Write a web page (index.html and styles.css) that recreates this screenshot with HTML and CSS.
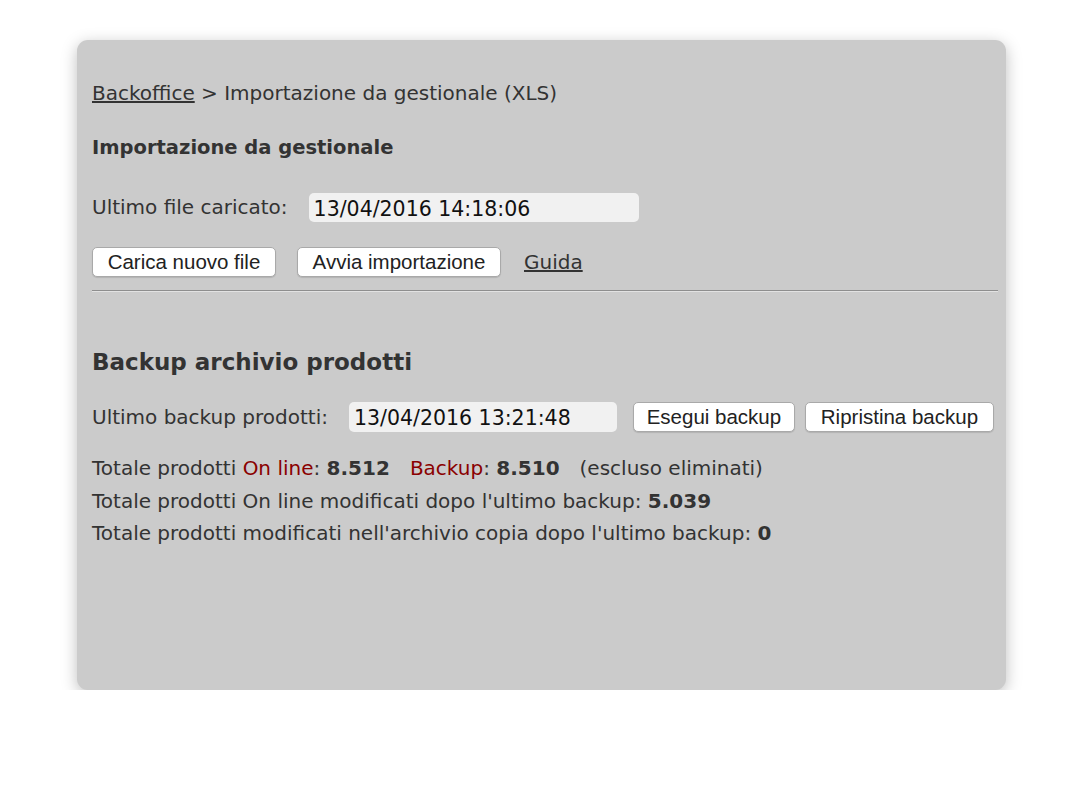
FILE: index.html
```html
<!DOCTYPE html>
<html>
<head>
<meta charset="utf-8">
<link rel="stylesheet" href="styles.css">
</head>
<body>
<div class="panel">
  <div class="crumbs"><a href="#">Backoffice</a> &gt; Importazione da gestionale (XLS)</div>
  <div class="subtitle">Importazione da gestionale</div>
  <div class="row row-file">
    <span class="label">Ultimo file caricato:</span>
    <span class="field field-file">13/04/2016 14:18:06</span>
  </div>
  <div class="row row-actions">
    <button class="btn btn-load">Carica nuovo file</button>
    <button class="btn btn-import">Avvia importazione</button>
    <a href="#" class="guide">Guida</a>
  </div>
  <hr class="sep">
  <h2 class="title">Backup archivio prodotti</h2>
  <div class="row row-backup">
    <span class="label">Ultimo backup prodotti:</span>
    <span class="field field-backup">13/04/2016 13:21:48</span>
    <button class="btn btn-exec">Esegui backup</button>
    <button class="btn btn-restore">Ripristina backup</button>
  </div>
  <div class="stats">
    <p>Totale prodotti <span class="red">On line</span>: <b>8.512</b><span class="gap"></span><span class="red">Backup</span>: <b>8.510</b><span class="gap"></span>(escluso eliminati)</p>
    <p>Totale prodotti On line modificati dopo l'ultimo backup: <b>5.039</b></p>
    <p>Totale prodotti modificati nell'archivio copia dopo l'ultimo backup: <b>0</b></p>
  </div>
</div>
</body>
</html>
```
FILE: styles.css
```css
html, body {
  margin: 0;
  padding: 0;
  background: #ffffff;
}
body {
  padding: 40px 0 0 77px;
  font-family: "DejaVu Sans", Verdana, sans-serif;
  color: #333333;
}
.panel {
  width: 929px;
  height: 650px;
  box-sizing: border-box;
  background: #cbcbcb;
  border-radius: 11px;
  box-shadow: 0 4px 16px rgba(0,0,0,0.26);
  padding: 40px 8px 0 15px;
  font-size: 20px;
}
.crumbs {
  line-height: 26px;
  height: 26px;
}
.crumbs a, .guide {
  color: #333333;
  text-decoration: underline;
}
.subtitle {
  margin-top: 29px;
  font-weight: bold;
  line-height: 26px;
  font-size: 19.5px;
}
.row {
  display: flex;
  align-items: center;
}
.row-file {
  margin-top: 31px;
  height: 30px;
}
.label {
  white-space: nowrap;
}
.field {
  box-sizing: border-box;
  background: #f1f1f1;
  border-radius: 5px;
  height: 29px;
  line-height: 29px;
  padding: 2px 0 0 5px;
  font-size: 20.5px;
  color: #111;
}
.field-file {
  width: 330px;
  margin-left: 21px;
}
.row-actions {
  margin-top: 25px;
  height: 30px;
}
.btn {
  box-sizing: border-box;
  height: 30px;
  background: #ffffff;
  border: 1px solid #a9a9a9;
  border-radius: 5px;
  font-family: "Liberation Sans", Arial, sans-serif;
  font-size: 20.5px;
  color: #222;
  padding: 0;
  margin: 0;
  box-shadow: 0 1px 1px rgba(0,0,0,0.12);
}
.btn-load { width: 184px; }
.btn-import { width: 204px; margin-left: 21px; }
.guide { margin-left: 23px; }
.sep {
  margin: 13px 0 0 0;
  width: 906px;
  border: 0;
  border-top: 1px solid #8e8e8e;
  border-bottom: 1px solid #e2e2e2;
  height: 0;
}
.title {
  margin: 55px 0 0 0;
  font-size: 23px;
  font-weight: bold;
  line-height: 30px;
}
.row-backup {
  margin-top: 24px;
  height: 31px;
}
.field-backup {
  width: 268px;
  margin-left: 21px;
  height: 30px;
}
.btn-exec { width: 162px; margin-left: 16px; }
.btn-restore { width: 189px; margin-left: 10px; }
.stats {
  margin-top: 20px;
}
.stats p {
  margin: 0;
  line-height: 32.5px;
}
.stats b {
  font-weight: bold;
}
.gap {
  display: inline-block;
  width: 20px;
}
.red {
  color: #8a0000;
}
```
